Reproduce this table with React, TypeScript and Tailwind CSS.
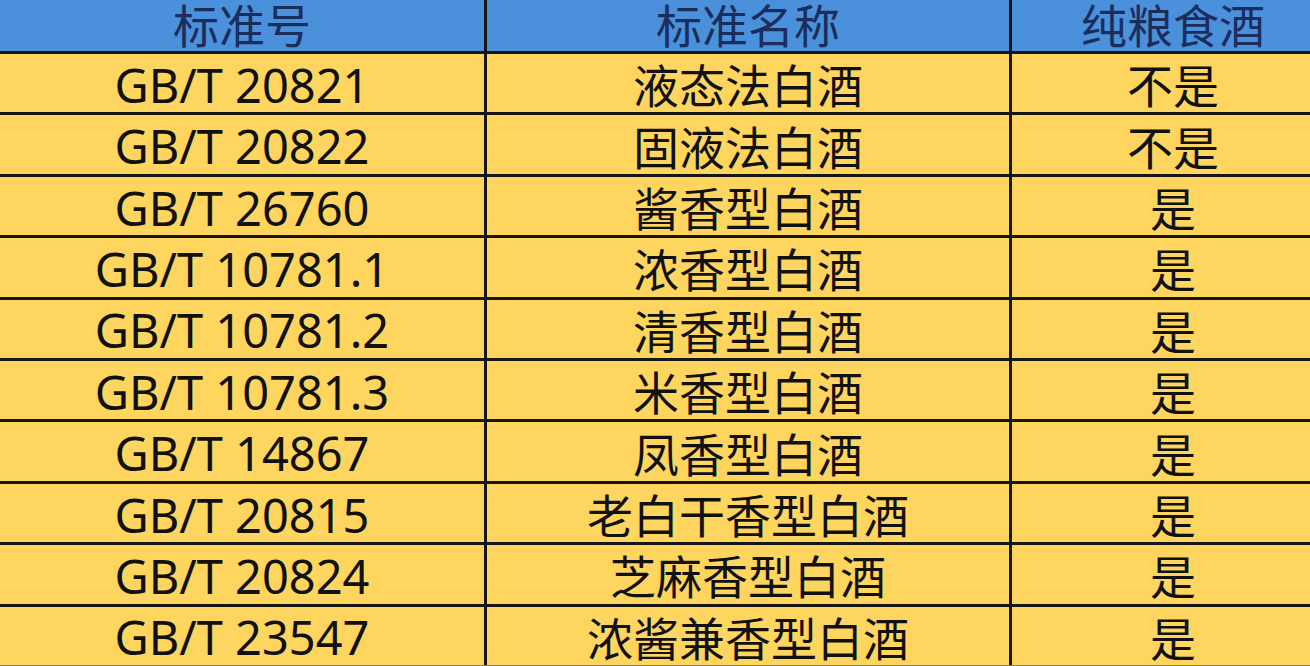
const rows = [
  { code: "GB/T 20821", name: "液态法白酒", pure: "不是" },
  { code: "GB/T 20822", name: "固液法白酒", pure: "不是" },
  { code: "GB/T 26760", name: "酱香型白酒", pure: "是" },
  { code: "GB/T 10781.1", name: "浓香型白酒", pure: "是" },
  { code: "GB/T 10781.2", name: "清香型白酒", pure: "是" },
  { code: "GB/T 10781.3", name: "米香型白酒", pure: "是" },
  { code: "GB/T 14867", name: "凤香型白酒", pure: "是" },
  { code: "GB/T 20815", name: "老白干香型白酒", pure: "是" },
  { code: "GB/T 20824", name: "芝麻香型白酒", pure: "是" },
  { code: "GB/T 23547", name: "浓酱兼香型白酒", pure: "是" },
];

const font = "font-['Noto_Sans','Noto_Sans_CJK_SC',sans-serif]";

export default function App() {
  return (
    <div className={`flex h-[666px] w-[1310px] flex-col overflow-hidden bg-[#fdd55f] ${font}`}>
      {/* 表头 */}
      <div className="grid h-[54px] shrink-0 grid-cols-[487px_525px_1fr] border-b-[3px] border-[#161616] bg-[#4a90da] text-[46px] font-normal leading-[51px] text-[#1b2d5c]">
        <div className="flex items-center justify-center border-r-[3px] border-[#161616]">标准号</div>
        <div className="flex items-center justify-center border-r-[3px] border-[#161616]">标准名称</div>
        <div className="flex items-center justify-center pl-6">纯粮食酒</div>
      </div>

      {/* 数据行 */}
      {rows.map((row, i) => (
        <div
          key={row.code}
          className={`grid flex-1 grid-cols-[487px_525px_1fr] text-[46px] leading-none text-[#111] ${
            i < rows.length - 1 ? "border-b-[3px] border-[#161616]" : "border-b border-[#8a7a4a]"
          }`}
        >
          <div className="flex items-center justify-center border-r-[3px] border-[#161616] pt-1 text-[47px]">{row.code}</div>
          <div className="flex items-center justify-center border-r-[3px] border-[#161616] pt-1">{row.name}</div>
          <div className="flex items-center justify-center pl-6 pt-1">{row.pure}</div>
        </div>
      ))}
    </div>
  );
}
